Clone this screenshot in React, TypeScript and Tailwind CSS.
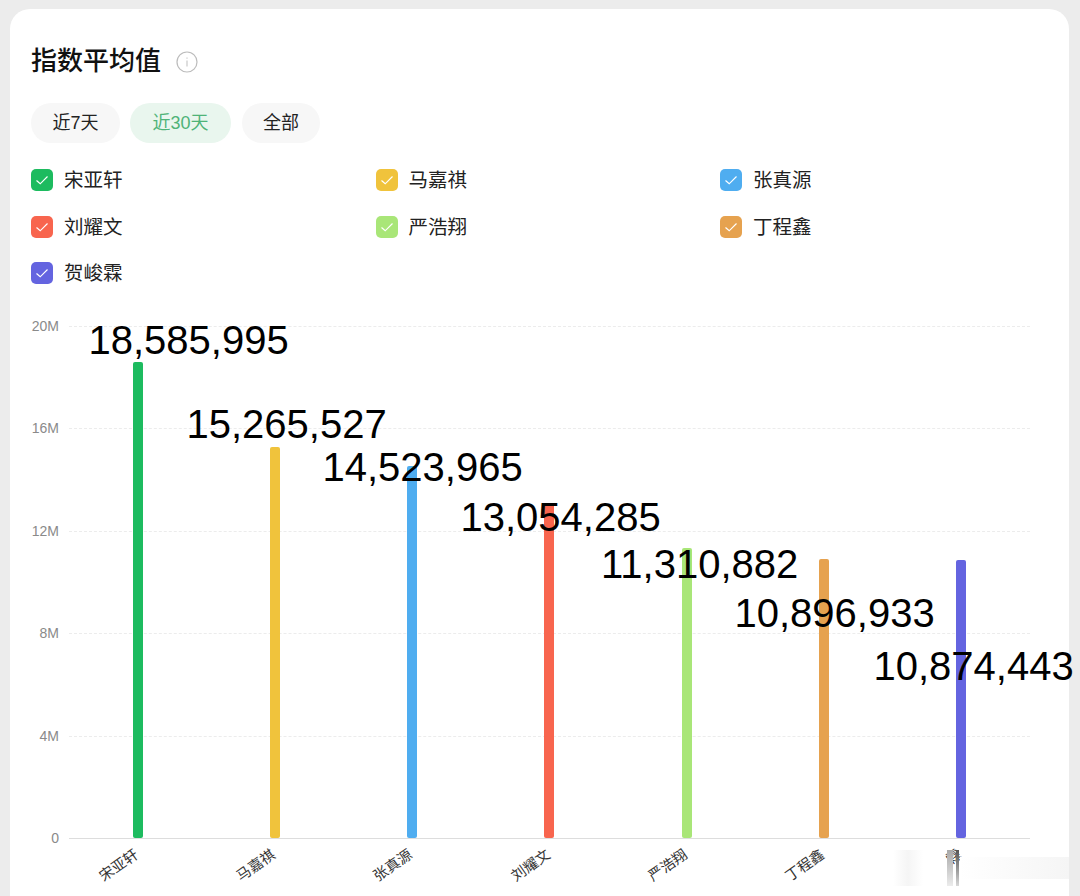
const font = { fontFamily: '"Liberation Sans", "Noto Sans CJK SC", sans-serif' };

const legend = [
  { name: "宋亚轩", color: "bg-[#1dbb5f]" },
  { name: "马嘉祺", color: "bg-[#f0c33c]" },
  { name: "张真源", color: "bg-[#4fadf0]" },
  { name: "刘耀文", color: "bg-[#f8654e]" },
  { name: "严浩翔", color: "bg-[#a9e678]" },
  { name: "丁程鑫", color: "bg-[#e6a24f]" },
  { name: "贺峻霖", color: "bg-[#6464e0]" },
];

const PLOT_H = 512;
const MAX = 20000000;

// labelX / labelY: where the big pasted-on numbers sit over the chart
const bars = [
  { name: "宋亚轩", value: 18585995, color: "#1dbb5f", labelX: 78.5, labelY: 40 },
  { name: "马嘉祺", value: 15265527, color: "#f0c33c", labelX: 176.5, labelY: 124 },
  { name: "张真源", value: 14523965, color: "#4fadf0", labelX: 312.5, labelY: 167 },
  { name: "刘耀文", value: 13054285, color: "#f8654e", labelX: 450.5, labelY: 217 },
  { name: "严浩翔", value: 11310882, color: "#a9e678", labelX: 591, labelY: 264 },
  { name: "丁程鑫", value: 10896933, color: "#e6a24f", labelX: 724.5, labelY: 313 },
  { name: "霖", value: 10874443, color: "#6464e0", labelX: 863.5, labelY: 366 },
];

const ticks = ["20M", "16M", "12M", "8M", "4M", "0"];

function Check() {
  return (
    <svg width="16" height="16" viewBox="0 0 16 16" fill="none">
      <path d="M2.5 8.5 L6.2 11.8 L13.5 4.5" stroke="#fff" strokeWidth="1.2" />
    </svg>
  );
}

export default function App() {
  return (
    <div className="h-[896px] overflow-hidden bg-[#ececec] pl-[10px] pt-[9px]" style={font}>
      <div className="h-[900px] w-[1059px] rounded-tl-[20px] rounded-tr-[20px] bg-white">
        <div className="flex items-center gap-[15px] pl-[21px] pt-[35px]">
          <h1 className="text-[26px] leading-[34px] font-medium tracking-normal text-[#111]">指数平均值</h1>
          <svg width="22" height="22" viewBox="0 0 22 22" fill="none" className="mt-[1px]">
            <circle cx="11" cy="11" r="10" stroke="#bcbcbc" strokeWidth="1.2" />
            <path d="M11 6.5v1.2M11 9.5v6" stroke="#c4c4c4" strokeWidth="1.1" />
          </svg>
        </div>

        <div className="mt-[25px] flex pl-[21px]">
          <button className="h-10 w-[89px] rounded-[20px] bg-[#f7f7f7] text-[18px] text-[#222]">近7天</button>
          <button className="ml-[10px] h-10 w-[101px] rounded-[20px] bg-[#e9f6ee] text-[18px] text-[#4fb378]">近30天</button>
          <button className="ml-[11px] h-10 w-[78px] rounded-[20px] bg-[#f7f7f7] text-[18px] text-[#222]">全部</button>
        </div>

        <div className="mt-[26px] grid w-[1054.5px] grid-cols-3 gap-y-[24.5px] pl-[21px]">
          {legend.map((item) => (
            <div key={item.name} className="flex h-[22px] items-center gap-[11px]">
              <span className={"flex h-[22px] w-[22px] items-center justify-center rounded-[5px] " + item.color}>
                <Check />
              </span>
              <span className="text-[19.5px] leading-[22px] text-[#222]">{item.name}</span>
            </div>
          ))}
        </div>

        <div className="relative mt-[16px] h-[596px] w-[1059px] pl-[10px] pt-[26px]">
          <div className="flex gap-[10px]">
            <div className="flex h-[513px] w-[39px] flex-col justify-between">
              {ticks.map((t) => (
                <span key={t} className="flex h-0 items-center justify-end text-[14px] text-[#8a8a8a]">
                  {t}
                </span>
              ))}
            </div>

            <div className="w-[961px]">
              <div className="relative h-[513px]">
                <div className="absolute inset-0 flex flex-col justify-between">
                  {ticks.map((t) => (
                    <div
                      key={t}
                      className={t === "0" ? "border-t border-[#dddddd]" : "border-t border-dashed border-[#ececec]"}
                    />
                  ))}
                </div>
                <div className="relative flex h-[512px] items-end">
                  {bars.map((b) => (
                    <div key={b.name} className="flex flex-1 justify-center">
                      <div
                        className="w-[10px] rounded-[2px]"
                        style={{ height: (b.value / MAX) * PLOT_H, backgroundColor: b.color }}
                      />
                    </div>
                  ))}
                </div>
              </div>

              <div className="flex pt-[8px]">
                {bars.map((b) => (
                  <div key={b.name} className="flex flex-1 justify-end pr-[74px]">
                    <span className="origin-top-right -rotate-[35deg] text-[14.5px] leading-none whitespace-nowrap text-[#333]">
                      {b.name}
                    </span>
                  </div>
                ))}
              </div>
            </div>
          </div>

          {/* smudged patch under the last label */}
          <div className="absolute top-[550px] left-[883px] flex h-[36px]">
            <div className="w-[30px] bg-gradient-to-r from-white via-[#f5f5f5] to-white" />
            <div className="ml-[24px] w-[6px] bg-gradient-to-b from-[#a8a8a8] to-[#ececec]" />
            <div className="ml-[3px] w-[3px] bg-gradient-to-b from-[#555] to-[#d8d8d8]" />
            <div className="my-[7px] ml-[1px] w-[109px] bg-gradient-to-r from-white to-[#f5f5f5]" />
          </div>

          {/* numbers pasted over the chart */}
          {bars.map((b) => (
            <span
              key={b.value}
              className="absolute -translate-y-1/2 text-[40px] leading-none whitespace-nowrap text-black"
              style={{ left: b.labelX, top: b.labelY }}
            >
              {b.value.toLocaleString("en-US")}
            </span>
          ))}
        </div>
      </div>
    </div>
  );
}
